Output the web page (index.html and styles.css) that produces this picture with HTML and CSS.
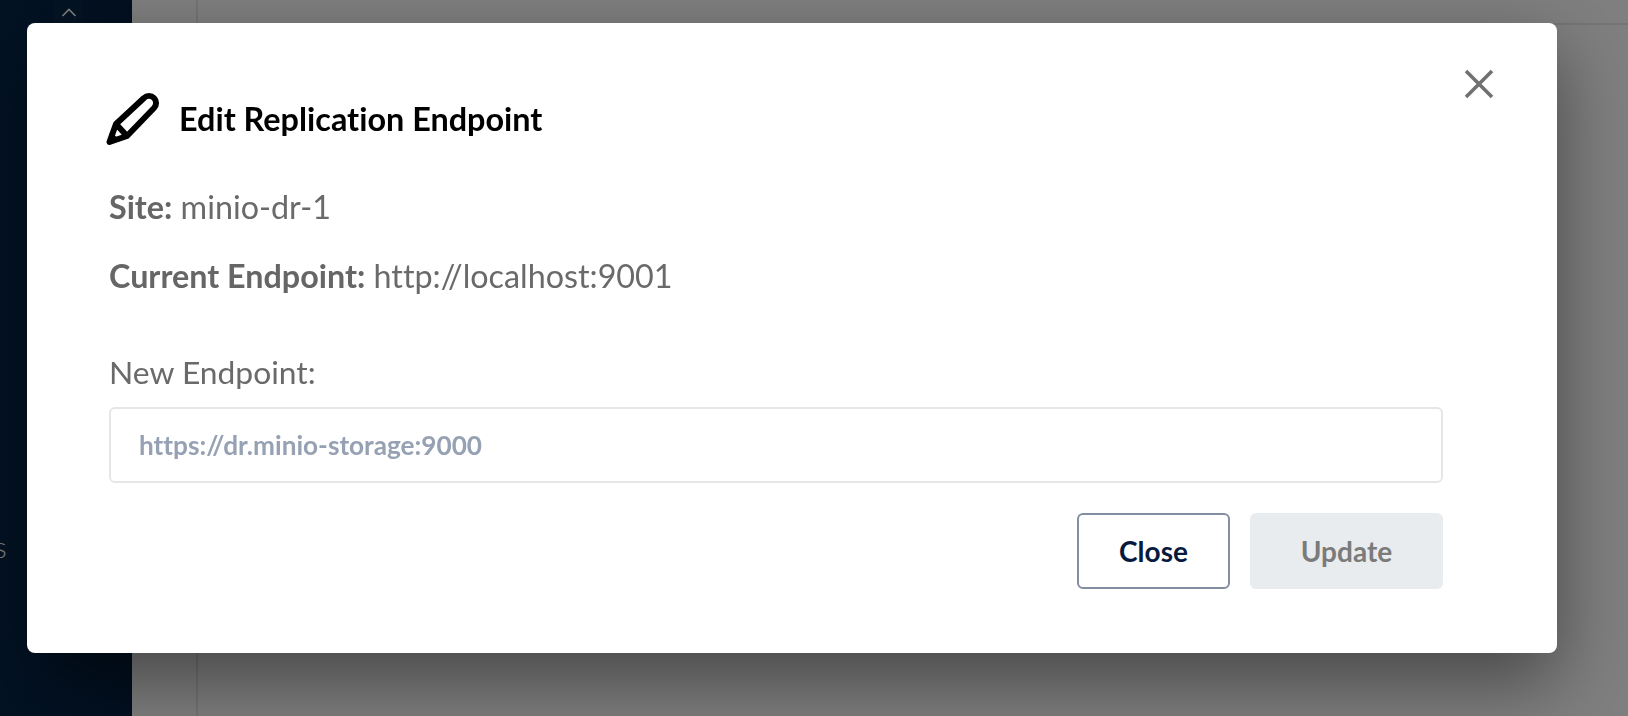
FILE: index.html
```html
<!DOCTYPE html>
<html lang="en">
<head>
<meta charset="utf-8">
<title>Edit Replication Endpoint</title>
<link rel="stylesheet" href="styles.css">
</head>
<body>
<div class="app">
  <nav class="sidebar">
    <div class="collapse">
      <svg class="chevron" width="16" height="9" viewBox="0 0 16 9"><path d="M1.5 8 L8 1.5 L14.5 8"/></svg>
    </div>
    <span class="nav-label">s</span>
  </nav>
  <div class="rail"></div>
  <main class="content"><div class="topbar"></div></main>
</div>
<div class="backdrop"></div>
<div class="overlay">
  <section class="modal">
    <button class="close-x" aria-label="Close">
      <svg width="30" height="30" viewBox="0 0 30 30"><path d="M2 2 L28 28 M28 2 L2 28"/></svg>
    </button>
    <h2 class="title">
      <svg class="pencil" width="56" height="56" viewBox="0 0 56 56">
        <path class="tip" d="M3.500 52 L6 42 L13.500 49.500 Z"/>
        <path class="outline" d="M11 33 L39 7 A7.070 7.070 0 0 1 49 17 L22 45 L4.500 51 Z M11 33 L22 45"/>
      </svg>
      <span>Edit Replication Endpoint</span>
    </h2>
    <p class="info"><strong>Site:</strong> minio-dr-1</p>
    <p class="info second"><strong>Current Endpoint:</strong> http://localhost:9001</p>
    <label class="field-label" for="endpoint">New Endpoint:</label>
    <input class="field" id="endpoint" type="text" placeholder="https://dr.minio-storage:9000">
    <div class="actions">
      <button class="btn btn-close">Close</button>
      <button class="btn btn-update" disabled>Update</button>
    </div>
  </section>
</div>
</body>
</html>
```
FILE: styles.css
```css
* { box-sizing: border-box; }
html, body { margin: 0; height: 100%; overflow: hidden; }
body { font-family: Lato, "Open Sans", sans-serif; background: #fff; font-variant-ligatures: none; }

.app { display: flex; height: 716px; }
.sidebar {
  width: 132px;
  flex: none;
  background: linear-gradient(90deg, #05264a 0%, #041f3f 100%);
  display: flex;
  flex-direction: column;
  align-items: flex-start;
}
.collapse {
  width: 28px;
  height: 24px;
  margin: 0 0 0 55px;
  display: flex;
  align-items: center;
  justify-content: center;
  background: rgba(255, 255, 255, .02);
}
.chevron path { fill: none; stroke: #fff; stroke-width: 1.6; }
.nav-label {
  margin: 505px 0 0 -6px;
  font-size: 30px;
  line-height: 34px;
  color: #fff;
  font-weight: 300;
}
.rail { width: 66px; flex: none; border-right: 2px solid #e8e8e8; }
.content { flex: 1; }
.topbar { height: 25px; border-bottom: 2px solid #e8e8e8; }

.backdrop { position: fixed; inset: 0; background: rgba(0, 0, 0, .5); }
.overlay { position: fixed; inset: 0; padding: 23px 71px 63px 27px; }

.modal {
  position: relative;
  height: 630px;
  background: #fff;
  border-radius: 8px;
  padding: 66px 114px 0 82px;
  box-shadow: 0 28px 76px rgba(0, 0, 0, .45);
}
.close-x {
  position: absolute;
  top: 46px;
  right: 63px;
  padding: 0;
  border: 0;
  background: none;
  display: flex;
}
.close-x path { fill: none; stroke: #707070; stroke-width: 3.6; }

.title {
  margin: 0;
  height: 60px;
  display: flex;
  align-items: center;
  gap: 18px;
  font-size: 32.4px;
  line-height: 40px;
  font-weight: 700;
  color: #000;
}
.pencil { flex: none; margin-left: -4px; }
.pencil .outline { fill: none; stroke: #000; stroke-width: 6; stroke-linejoin: round; }
.pencil .tip { fill: #000; stroke: #000; stroke-width: 2; stroke-linejoin: round; }

.info { margin: 38px 0 0; font-size: 32.3px; line-height: 40px; color: #6a6a6a; font-weight: 400; }
.info.second { margin-top: 29px; }
.info strong { font-weight: 700; color: #666; }

.field-label {
  display: block;
  margin-top: 56px;
  font-size: 31.8px;
  line-height: 40px;
  color: #6a6a6a;
  font-weight: 400;
}
.field {
  display: block;
  width: 100%;
  height: 76px;
  margin-top: 15px;
  padding: 0 28px;
  border: 2px solid #e4e6e7;
  border-radius: 6px;
  background: #fff;
  font: 700 26.2px Lato, sans-serif;
  font-variant-ligatures: none;
  outline: 0;
}
.field::placeholder { color: #96a1b3; opacity: 1; }

.actions { display: flex; justify-content: flex-end; gap: 20px; margin-top: 30px; }
.btn {
  height: 76px;
  border-radius: 6px;
  font: 700 28px Lato, sans-serif;
  padding: 0;
}
.btn-close { width: 153px; background: #fff; border: 2px solid #838ea3; color: #07193e; }
.btn-update { width: 193px; background: #e9ecee; border: 0; color: #7b7b7b; }
```
